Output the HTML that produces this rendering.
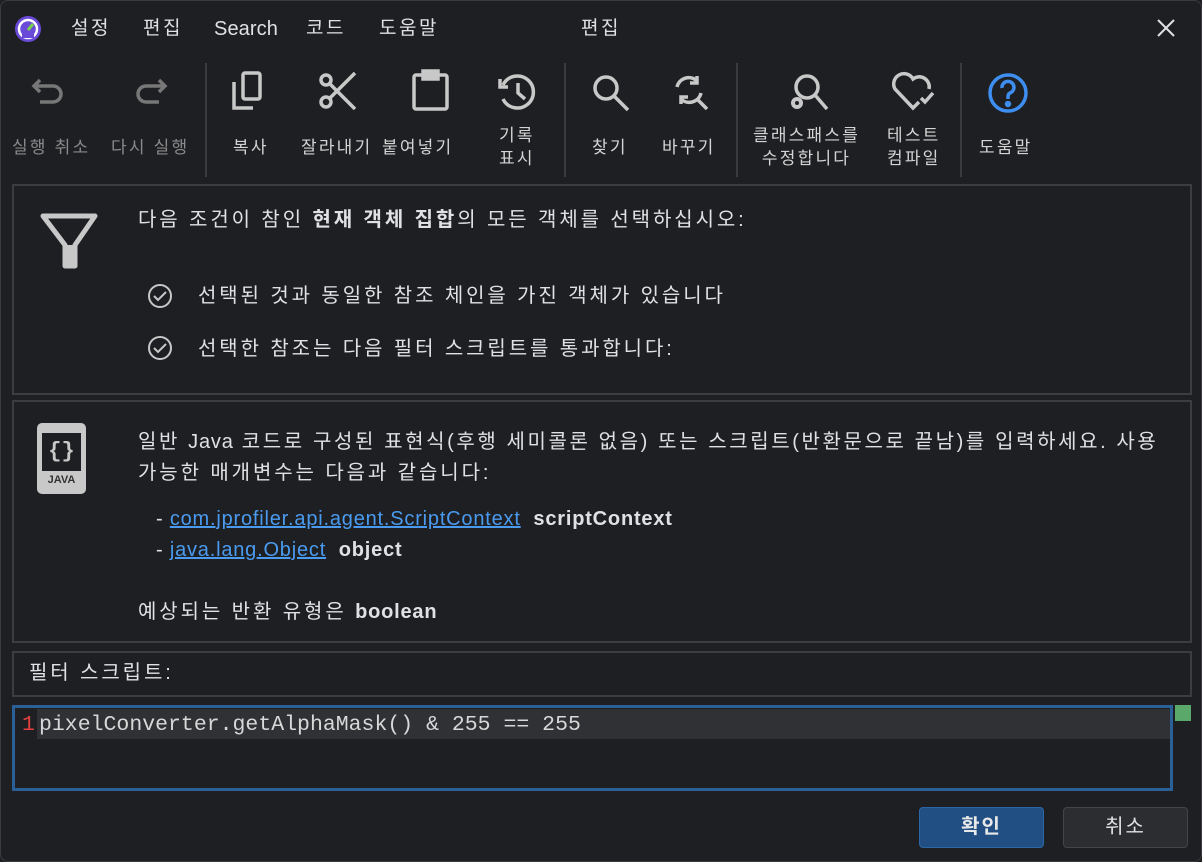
<!DOCTYPE html>
<html><head><meta charset="utf-8"><style>
*{margin:0;padding:0;box-sizing:border-box}
body{width:1202px;height:862px;background:#1e1f22;font-family:"Liberation Sans","Noto Sans CJK KR",sans-serif;color:#dfe1e5;position:relative;overflow:hidden;border:1px solid #3a3b3e;border-radius:8px}
.a{position:absolute;white-space:nowrap}
.menu{font-size:19px;color:#dfe1e5;top:14px;line-height:28px;letter-spacing:2.5px}
.lbl{font-size:17px;color:#d4d4d4;text-align:center;line-height:23px;letter-spacing:2.2px}
.dis{color:#8a8a8a}
.sep{position:absolute;top:62px;width:2px;height:114px;background:#393b3f}
.panel{position:absolute;left:11px;width:1180px;border:2px solid #3b3d41}
.t{font-size:20px;color:#dfe1e5;letter-spacing:2.9px;line-height:26px}
.l{letter-spacing:0.8px}
a{color:#4a9bf0;text-decoration:underline}
</style></head><body>
<svg class="a" style="left:13px;top:14px" width="28" height="28" viewBox="0 0 28 28"><circle cx="14" cy="14" r="13" fill="#6a4ad8"/><circle cx="14" cy="14" r="9" fill="none" stroke="#fff" stroke-width="2.5"/><path d="M14 15 L19 9" stroke="#7bd14a" stroke-width="3"/><rect x="8" y="19" width="12" height="4" fill="#6a4ad8"/></svg>
<div class="a menu" style="left:70px">설정</div>
<div class="a menu" style="left:142px">편집</div>
<div class="a menu" style="left:213px;font-size:20px;letter-spacing:0.1px">Search</div>
<div class="a menu" style="left:305px">코드</div>
<div class="a menu" style="left:378px">도움말</div>
<div class="a menu" style="left:580px">편집</div>
<svg class="a" style="left:1154px;top:16px" width="22" height="22"><path d="M3 3L19 19M19 3L3 19" stroke="#dfe1e5" stroke-width="2"/></svg>

<svg class="a" style="left:30px;top:72px" width="40" height="40" viewBox="0 0 40 40" fill="none" stroke="#777" stroke-width="3.5"><path d="M9 7 L3 13 L9 19"/><path d="M4 13 H22 a8 8 0 0 1 0 16 H9"/></svg>
<svg class="a" style="left:128px;top:72px" width="40" height="40" viewBox="0 0 40 40" fill="none" stroke="#777" stroke-width="3.5"><path d="M30 7 L36 13 L30 19"/><path d="M35 13 H17 a8 8 0 0 0 0 16 H30"/></svg>
<div class="sep" style="left:204px"></div>
<svg class="a" style="left:228px;top:68px" width="44" height="44" viewBox="0 0 44 44" fill="none" stroke="#c8c8c8" stroke-width="3.5"><rect x="14" y="4" width="17" height="26" rx="2"/><path d="M5 13 V39 H24"/></svg>
<svg class="a" style="left:314px;top:68px" width="44" height="44" viewBox="0 0 44 44" fill="none" stroke="#c8c8c8" stroke-width="3.5"><circle cx="11" cy="11" r="5"/><circle cx="11" cy="33" r="5"/><path d="M15 15 L40 40M15 29 L40 4"/></svg>
<svg class="a" style="left:408px;top:66px" width="44" height="46" viewBox="0 0 44 46" fill="none" stroke="#c8c8c8" stroke-width="3.5"><rect x="5" y="8" width="33" height="34" rx="2"/><rect x="14" y="4" width="15" height="8" fill="#c8c8c8"/></svg>
<svg class="a" style="left:496px;top:70px" width="42" height="42" viewBox="0 0 42 42" fill="none" stroke="#c8c8c8" stroke-width="3.5"><path d="M6 14 A16 16 0 1 1 6 28"/><path d="M3 8 V16 H11"/><path d="M21 12 V22 L28 28"/></svg>
<div class="sep" style="left:563px"></div>
<svg class="a" style="left:588px;top:70px" width="44" height="44" viewBox="0 0 44 44" fill="none" stroke="#c8c8c8" stroke-width="3.5"><circle cx="17" cy="17" r="11"/><path d="M25 25 L39 39"/></svg>
<svg class="a" style="left:670px;top:72px" width="44" height="40" viewBox="0 0 44 40" fill="none" stroke="#c8c8c8" stroke-width="3.5"><path d="M6 14 A12 12 0 0 1 26 8"/><path d="M30 20 A12 12 0 0 1 10 26"/><path d="M26 3V10H19M10 31V24H17"/><path d="M26 26L36 36"/></svg>
<div class="sep" style="left:735px"></div>
<svg class="a" style="left:784px;top:70px" width="46" height="44" viewBox="0 0 46 44" fill="none" stroke="#c8c8c8" stroke-width="3.5"><circle cx="22" cy="16" r="11"/><path d="M30 24 L42 38"/><circle cx="12" cy="32" r="5" fill="#c8c8c8" stroke-width="2"/><circle cx="12" cy="32" r="2" fill="#1e1f22" stroke="none"/></svg>
<svg class="a" style="left:890px;top:70px" width="48" height="42" viewBox="0 0 48 42" fill="none" stroke="#c8c8c8" stroke-width="3.5"><path d="M38 18 A10 10 0 0 0 22 8 A10 10 0 0 0 4 18 L22 37 L28 31"/><path d="M30 27 L34 31 L42 22"/></svg>
<div class="sep" style="left:959px"></div>
<svg class="a" style="left:985px;top:70px" width="44" height="44" viewBox="0 0 44 44" fill="none" stroke="#3d8ef0" stroke-width="3.5"><circle cx="22" cy="22" r="18"/><path d="M16 17 a6 6 0 1 1 8 5 q-2 1 -2 4 v2"/><circle cx="22" cy="33" r="1.5" fill="#3d8ef0"/></svg>

<div class="a lbl dis" style="left:11px;top:135px">실행 취소</div>
<div class="a lbl dis" style="left:110px;top:135px">다시 실행</div>
<div class="a lbl" style="left:232px;top:135px">복사</div>
<div class="a lbl" style="left:300px;top:135px">잘라내기</div>
<div class="a lbl" style="left:381px;top:135px">붙여넣기</div>
<div class="a lbl" style="left:498px;top:123px">기록<br>표시</div>
<div class="a lbl" style="left:591px;top:135px">찾기</div>
<div class="a lbl" style="left:661px;top:135px">바꾸기</div>
<div class="a lbl" style="left:752px;top:123px">클래스패스를<br>수정합니다</div>
<div class="a lbl" style="left:886px;top:123px">테스트<br>컴파일</div>
<div class="a lbl" style="left:978px;top:135px">도움말</div>

<div class="panel" style="top:183px;height:211px"></div>
<svg class="a" style="left:38px;top:210px" width="62" height="60" viewBox="0 0 62 60"><path d="M4 5 H56 L36 34 V55 H26 V34 Z" fill="none" stroke="#c8c8c8" stroke-width="5" stroke-linejoin="round"/><rect x="26" y="34" width="10" height="22" rx="2" fill="#c8c8c8"/></svg>
<div class="a t" style="left:137px;top:206px">다음 조건이 참인 <b>현재 객체 집합</b>의 모든 객체를 선택하십시오:</div>
<svg class="a" style="left:146px;top:282px" width="26" height="26" viewBox="0 0 26 26" fill="none" stroke="#c8c8c8" stroke-width="2"><circle cx="13" cy="13" r="11"/><path d="M7 13 L11 17 L19 9"/></svg>
<div class="a t" style="left:197px;top:282px">선택된 것과 동일한 참조 체인을 가진 객체가 있습니다</div>
<svg class="a" style="left:146px;top:334px" width="26" height="26" viewBox="0 0 26 26" fill="none" stroke="#c8c8c8" stroke-width="2"><circle cx="13" cy="13" r="11"/><path d="M7 13 L11 17 L19 9"/></svg>
<div class="a t" style="left:197px;top:335px">선택한 참조는 다음 필터 스크립트를 통과합니다:</div>

<div class="panel" style="top:399px;height:243px"></div>
<div class="a" style="left:36px;top:422px;width:49px;height:71px;background:#c8c8c8;border-radius:5px"></div>
<div class="a" style="left:41px;top:432px;width:39px;height:38px;background:#1e1f22;color:#c8c8c8;font:bold 22px 'Liberation Mono',monospace;text-align:center;line-height:38px">{}</div>
<div class="a" style="left:36px;top:473px;width:49px;font:bold 11px 'Liberation Sans';color:#333;text-align:center">JAVA</div>
<div class="a t" style="left:137px;top:426px;line-height:31px;letter-spacing:2.6px">일반 <span class="l">Java</span> 코드로 구성된 표현식(후행 세미콜론 없음) 또는 스크립트(반환문으로 끝남)를 입력하세요. 사용<br><span style="letter-spacing:2.9px">가능한 매개변수는 다음과 같습니다:</span></div>
<div class="a t l" style="left:155px;top:505px">- <a>com.jprofiler.api.agent.ScriptContext</a>&nbsp; <b>scriptContext</b></div>
<div class="a t l" style="left:155px;top:536px">- <a>java.lang.Object</a>&nbsp; <b>object</b></div>
<div class="a t" style="left:137px;top:598px">예상되는 반환 유형은 <b class="l">boolean</b></div>

<div class="panel" style="top:650px;height:46px"></div>
<div class="a t" style="left:28px;top:659px">필터 스크립트:</div>

<div class="a" style="left:11px;top:704px;width:1161px;height:86px;border:3px solid #2b5f98;background:#1e1f22"></div>
<div class="a" style="left:36px;top:708px;width:1133px;height:30px;background:#303134"></div>
<div class="a" style="left:21px;top:711px;font:21.5px/26px 'Liberation Mono',monospace;color:#e04040">1</div>
<div class="a" style="left:38px;top:711px;font:21.5px/26px 'Liberation Mono',monospace;color:#d8d8d8">pixelConverter.getAlphaMask() &amp; 255 == 255</div>
<div class="a" style="left:1174px;top:704px;width:16px;height:16px;background:#5aa86a"></div>

<div class="a" style="left:918px;top:806px;width:125px;height:41px;background:#214f83;border:1px solid #2c66a5;border-radius:4px;text-align:center;line-height:39px;font-size:20px;letter-spacing:2px;font-weight:bold;color:#e8e8e8">확인</div>
<div class="a" style="left:1062px;top:806px;width:125px;height:41px;background:#2b2d30;border:1px solid #434548;border-radius:4px;text-align:center;line-height:39px;font-size:20px;letter-spacing:2px;color:#dfe1e5">취소</div>
</body></html>
